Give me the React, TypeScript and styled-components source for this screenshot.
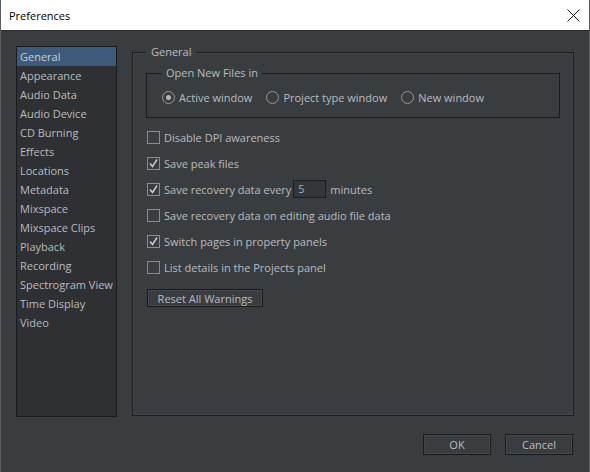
import styled, { createGlobalStyle } from "styled-components";

const GlobalStyle = createGlobalStyle`
  html, body {
    margin: 0;
    padding: 0;
    background: #3a3d40;
  }
  * {
    box-sizing: border-box;
  }
`;

const Window = styled.div`
  width: 590px;
  height: 472px;
  display: flex;
  flex-direction: column;
  background: #3a3d40;
  border-left: 1px solid #5b5e61;
  border-right: 1px solid #5b5e61;
  font-family: "Open Sans", "Noto Sans", sans-serif;
  font-size: 11px;
  color: #b9bcbf;
  overflow: hidden;
`;

const TitleBar = styled.div`
  height: 31px;
  flex: none;
  display: flex;
  align-items: center;
  justify-content: space-between;
  padding: 0 8px;
  background: #ffffff;
  color: #000000;
  font-size: 11px;
  border-bottom: 1px solid #2a2c2e;
`;

const CloseButton = styled.div`
  width: 13px;
  height: 13px;
  margin-right: 1px;
  display: flex;
`;

const Body = styled.div`
  flex: 1;
  display: flex;
  gap: 15px;
  padding: 15px 15px 0 15px;
`;

const Sidebar = styled.ul`
  list-style: none;
  margin: 0;
  padding: 0;
  width: 101px;
  height: 371px;
  background: #2e3033;
  border: 1px solid #1a1b1d;
`;

const SideItem = styled.li<{ $active?: boolean }>`
  height: 19px;
  line-height: 19px;
  padding-left: 3px;
  white-space: nowrap;
  background: ${(p) => (p.$active ? "#3d5a7b" : "transparent")};
  color: ${(p) => (p.$active ? "#c6cfd9" : "#b9bcbf")};
`;

const Group = styled.fieldset<{ $inner?: boolean }>`
  margin: 0;
  min-width: 0;
  border: 1px solid #1b1c1e;
  box-shadow: ${(p) => (p.$inner ? "none" : "inset 0 0 0 1px #42454a")};
  padding: ${(p) => (p.$inner ? "10px 15px 12px 15px" : "9px 13px 0 13px")};
  ${(p) => (p.$inner ? "" : "flex: 1; height: 370px;")}
`;

const Legend = styled.legend<{ $inner?: boolean }>`
  padding: 0 ${(p) => (p.$inner ? "4px" : "5px")};
  line-height: 12px;
  font-size: 11px;
  color: #b9bcbf;
`;

const RadioRow = styled.div`
  display: flex;
  align-items: center;
  height: 16px;
`;

const RadioLabel = styled.label`
  display: flex;
  align-items: center;
  gap: 4px;
  margin-right: 14px;
  white-space: nowrap;
`;

const RadioCircle = styled.span<{ $checked?: boolean }>`
  width: 13px;
  height: 13px;
  border-radius: 50%;
  border: 1px solid #96999c;
  display: flex;
  align-items: center;
  justify-content: center;
  &::after {
    content: "";
    width: 5px;
    height: 5px;
    border-radius: 50%;
    background: ${(p) => (p.$checked ? "#b4b7ba" : "transparent")};
  }
`;

const Options = styled.div`
  margin: 6px 0 0 1px;
  display: flex;
  flex-direction: column;
`;

const CheckRow = styled.label`
  height: 26px;
  display: flex;
  align-items: center;
  gap: 4px;
  white-space: nowrap;
`;

const CheckBox = styled.span`
  width: 13px;
  height: 13px;
  flex: none;
  border: 1px solid #8a8d90;
  display: flex;
  align-items: center;
  justify-content: center;
`;

const NumberField = styled.span`
  width: 33px;
  height: 18px;
  margin: 0 0 0 -2px;
  padding-left: 4px;
  line-height: 16px;
  background: #34373a;
  border: 1px solid #1b1c1e;
  color: #8fb3dc;
`;

const Button = styled.button<{ $wide?: boolean }>`
  height: ${(p) => (p.$wide ? "18px" : "21px")};
  width: ${(p) => (p.$wide ? "116px" : "68px")};
  padding: 0;
  background: #3a3d40;
  border: 1px solid #1a1b1d;
  box-shadow: inset 0 0 0 1px #44474b;
  color: #b9bcbf;
  font-family: inherit;
  font-size: 11px;
`;

const ResetButton = styled(Button)`
  margin-top: 9px;
  align-self: flex-start;
`;

const Footer = styled.div`
  flex: none;
  height: 55px;
  display: flex;
  justify-content: flex-end;
  gap: 14px;
  padding: 17px 16px 0 0;
`;

const CheckMark = () => (
  <svg width="11" height="11" viewBox="0 0 11 11">
    <path d="M2 5.5 L4.5 8.5 L9 1.5" fill="none" stroke="#cfd1d3" strokeWidth="1.4" />
  </svg>
);

const sections = [
  "General",
  "Appearance",
  "Audio Data",
  "Audio Device",
  "CD Burning",
  "Effects",
  "Locations",
  "Metadata",
  "Mixspace",
  "Mixspace Clips",
  "Playback",
  "Recording",
  "Spectrogram View",
  "Time Display",
  "Video",
];

const Check = ({ on }: { on?: boolean }) => <CheckBox>{on && <CheckMark />}</CheckBox>;

export default function App() {
  return (
    <>
      <GlobalStyle />
      <Window>
        <TitleBar>
          <span>Preferences</span>
          <CloseButton>
            <svg width="13" height="13" viewBox="0 0 13 13">
              <path d="M0.5 0.5 L12.5 12.5 M12.5 0.5 L0.5 12.5" stroke="#111" strokeWidth="1" />
            </svg>
          </CloseButton>
        </TitleBar>
        <Body>
          <Sidebar>
            {sections.map((s, i) => (
              <SideItem key={s} $active={i === 0}>
                {s}
              </SideItem>
            ))}
          </Sidebar>
          <Group>
            <Legend>General</Legend>
            <Group $inner>
              <Legend $inner>Open New Files in</Legend>
              <RadioRow>
                <RadioLabel>
                  <RadioCircle $checked />
                  Active window
                </RadioLabel>
                <RadioLabel>
                  <RadioCircle />
                  Project type window
                </RadioLabel>
                <RadioLabel>
                  <RadioCircle />
                  New window
                </RadioLabel>
              </RadioRow>
            </Group>
            <Options>
              <CheckRow>
                <Check />
                Disable DPI awareness
              </CheckRow>
              <CheckRow>
                <Check on />
                Save peak files
              </CheckRow>
              <CheckRow>
                <Check on />
                Save recovery data every
                <NumberField>5</NumberField>
                minutes
              </CheckRow>
              <CheckRow>
                <Check />
                Save recovery data on editing audio file data
              </CheckRow>
              <CheckRow>
                <Check on />
                Switch pages in property panels
              </CheckRow>
              <CheckRow>
                <Check />
                List details in the Projects panel
              </CheckRow>
              <ResetButton $wide>Reset All Warnings</ResetButton>
            </Options>
          </Group>
        </Body>
        <Footer>
          <Button>OK</Button>
          <Button>Cancel</Button>
        </Footer>
      </Window>
    </>
  );
}
